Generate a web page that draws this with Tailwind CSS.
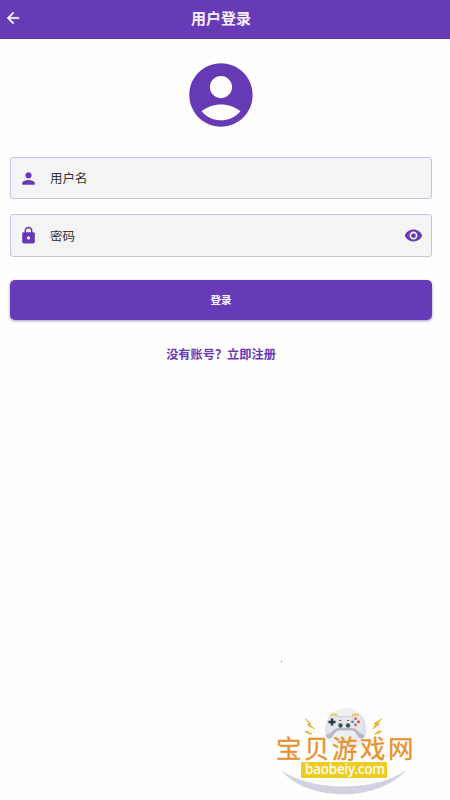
<!DOCTYPE html>
<html lang="zh-CN">
<head>
<meta charset="utf-8">
<meta name="viewport" content="width=device-width, initial-scale=1">
<title>用户登录</title>
<script src="https://cdn.jsdelivr.net/npm/@tailwindcss/browser@4"></script>
</head>
<body class="relative h-[800px] overflow-hidden bg-[#fefefe] font-['Noto_Sans_CJK_SC',sans-serif] text-[#673ab5]">
  <header class="flex h-[39px] items-center border-b border-[#5b35a5] bg-[#673ab7] pr-2 pb-[3px] pl-1 text-white">
    <svg class="size-[18px] shrink-0" viewBox="0 0 24 24" fill="currentColor" stroke="currentColor" stroke-width=".5"><path d="M20 11H7.83l5.59-5.59L12 4l-8 8 8 8 1.41-1.41L7.83 13H20v-2z"/></svg>
    <h1 class="mr-[22px] flex-1 text-center text-[15px] leading-6 font-bold text-[#f8f0ff]">用户登录</h1>
  </header>
  <main class="flex w-[442px] flex-col items-center px-[10px] pt-[18px]">
    <svg class="size-[76px]" viewBox="0 0 24 24" fill="currentColor"><path d="M12 2C6.48 2 2 6.48 2 12s4.48 10 10 10 10-4.48 10-10S17.52 2 12 2zm0 4c1.93 0 3.5 1.57 3.5 3.5S13.93 13 12 13s-3.5-1.57-3.5-3.5S10.07 6 12 6zm0 14c-2.03 0-4.43-.82-6.14-2.88C7.55 15.8 9.68 15 12 15s4.45.8 6.14 2.12C16.43 19.18 14.03 20 12 20z"/></svg>
    <div class="mt-6 flex h-[42px] w-full items-center gap-3 rounded-[3px] border border-[#c9c3df] bg-[#f4f4f4] px-2">
      <svg class="size-[19px]" viewBox="0 0 24 24" fill="currentColor"><path d="M12 12c2.21 0 4-1.79 4-4s-1.79-4-4-4-4 1.79-4 4 1.79 4 4 4zm0 2c-2.67 0-8 1.34-8 4v2h16v-2c0-2.66-5.33-4-8-4z"/></svg>
      <span class="text-[12.5px] leading-5 text-[#333]">用户名</span>
    </div>
    <div class="mt-[15px] flex h-[43px] w-full items-center gap-3 rounded-[3px] border border-[#c9c3df] bg-[#f4f4f4] px-2">
      <svg class="size-[19px]" viewBox="0 0 24 24" fill="currentColor"><path d="M18 8h-1V6c0-2.76-2.24-5-5-5S7 3.240 7 6v2H6c-1.100 0-2 .9-2 2v10c0 1.100.9 2 2 2h12c1.100 0 2-.9 2-2V10c0-1.100-.9-2-2-2zm-6 9c-1.100 0-2-.9-2-2s.9-2 2-2 2 .9 2 2-.9 2-2 2zm3.100-9H8.900V6c0-1.710 1.390-3.100 3.100-3.100s3.100 1.390 3.100 3.100v2z"/></svg>
      <span class="flex-1 text-[12.5px] leading-5 text-[#333]">密码</span>
      <svg class="size-[19px]" viewBox="0 0 24 24" fill="currentColor"><path d="M12 4.500C7 4.500 2.730 7.610 1 12c1.730 4.390 6 7.500 11 7.500s9.270-3.110 11-7.500c-1.730-4.390-6-7.500-11-7.500zM12 17c-2.760 0-5-2.240-5-5s2.240-5 5-5 5 2.240 5 5-2.240 5-5 5zm0-8c-1.660 0-3 1.340-3 3s1.340 3 3 3 3-1.340 3-3-1.340-3-3-3z"/></svg>
    </div>
    <button class="mt-[23px] h-10 w-full rounded-[5px] bg-[#673ab7] text-[10.5px] font-bold text-[#faf4ff] shadow-[0_1px_3px_rgba(60,30,110,0.45)]">登录</button>
    <a class="mt-6 text-[12.2px] leading-5 font-bold">没有账号？立即注册</a>
  </main>

  <div class="absolute top-[661px] left-[281px] size-px bg-[#777]"></div>

  <!-- Site badge -->
  <div class="absolute top-[700px] left-[270px] h-[100px] w-[150px]">
    <svg class="absolute inset-0 size-full" viewBox="0 0 150 100">
      <circle cx="76" cy="29" r="21" fill="#eeeff2"/>
      <path d="M11 70C35 101 108 104 137 69C111 91 42 93 11 70Z" fill="#d1d1e0"/>
      <path d="M60 16.500q6-3 8 0h14q4-3 8 0c3 1 4 5 5 12q1 9-3 10c-4 1-6-8-10-8H69c-5 0-6 9-10 8q-5-1-3-10c1-7 2-11 4-12Z" fill="#b5b8c6"/>
      <path d="M60 16q5-2 8 1h14q4-3 8-1c4 3 5 12 5 19-5 0-8-7-13-7H68c-4 0-7 7-13 7 0-7 1-16 5-19Z" fill="#e4e4eb"/>
      <path d="M60 15q4-1.500 7 0M82 15q4-1.500 7 0" fill="none" stroke="#efc53d" stroke-width="1.500"/>
      <path d="M62 18.500v7M58.500 22h7" stroke="#273846" stroke-width="2.400"/>
      <g fill="#35594f"><circle cx="70.500" cy="25.500" r="2.200"/><circle cx="78" cy="25.500" r="2.200"/></g>
      <path d="M69 20.500h2.500M77 20.500h2.500" stroke="#d84e5e"/>
      <circle cx="85.500" cy="18.800" r="1.400" fill="#de5761"/><circle cx="85.500" cy="24.800" r="1.400" fill="#d9594f"/><circle cx="82.500" cy="21.800" r="1.400" fill="#3e91b6"/><circle cx="88.500" cy="21.800" r="1.400" fill="#c93958"/>
      <g fill="#f0ac2c"><path d="m35.500 19 5 4.500-.5 1.500 4.500 4-7-4 1.500-1.500ZM35 32l3-1 1 1.500 3 1.500-4-.5-.5-1ZM111.500 19l-4 4.500 2 .5-6.500 5 3-5-2-.5ZM112 31.500l-4-.5-.5 1.500-3 1.500 4-.5.5-1Z" stroke="#f0ac2c" stroke-width=".8"/></g>
      <rect x="31" y="62" width="86" height="16" fill="#edcc26"/>
    </svg>
    <div class="absolute top-[34px] left-[6px] text-[25.500px] leading-[26px] tracking-[2.5px] whitespace-nowrap text-[#e8912d] [-webkit-text-stroke:0.3px_#e8912d]">宝贝游戏网</div>
    <div class="absolute top-[61px] left-[35px] font-['Noto_Sans',sans-serif] text-[13.5px] leading-4 font-medium tracking-[-0.2px] whitespace-nowrap text-[#fffef2]">baobeiy.com</div>
  </div>
</body>
</html>
